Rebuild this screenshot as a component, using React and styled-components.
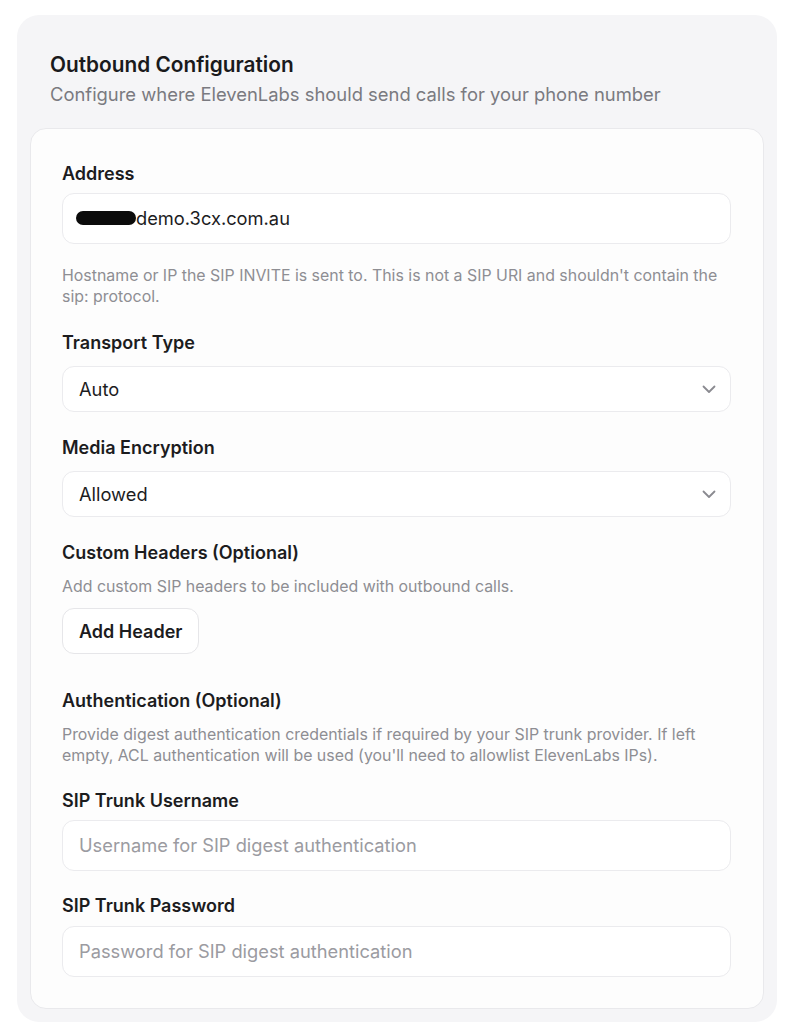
import React from 'react';
import styled, { createGlobalStyle } from 'styled-components';

const GlobalStyle = createGlobalStyle`
  body {
    margin: 0;
    background: #ffffff;
    font-family: Inter, "Noto Sans", sans-serif;
    color: #1c1c1e;
  }
`;

const Page = styled.div`
  padding: 15px 13px 2px 17px;
`;

const Panel = styled.section`
  background: #f5f5f7;
  border-radius: 22px;
  padding: 13px;
`;

const Header = styled.div`
  padding: 23px 20px 21px 20px;
`;

const Title = styled.h2`
  margin: 0;
  font-size: 20.8px;
  font-weight: 600;
  line-height: 28px;
  color: #1a1a1c;
`;

const Subtitle = styled.p`
  margin: 2px 0 0;
  font-size: 18.4px;
  line-height: 26px;
  color: #7a7a80;
`;

const Card = styled.div`
  background: #fdfdfd;
  border: 1px solid #e9e9ec;
  border-radius: 16px;
  padding: 32px 32px 31px 31px;
  display: flex;
  flex-direction: column;
  gap: 22.5px;
`;

const Field = styled.div`
  display: flex;
  flex-direction: column;
`;

const Label = styled.label`
  font-size: 18px;
  font-weight: 600;
  line-height: 25px;
  color: #1c1c1e;
  margin-bottom: ${p => (p.$gap === undefined ? 7 : p.$gap)}px;
`;

const Help = styled.p`
  margin: ${p => p.$top || 0}px 0 0;
  font-size: 15.9px;
  line-height: 21px;
  color: #8e8e93;
`;

const InputBox = styled.div`
  height: 51px;
  box-sizing: border-box;
  border: 1px solid #ebebee;
  border-radius: 12px;
  background: #ffffff;
  display: flex;
  align-items: center;
  padding: 0 16px;
  font-size: 18.3px;
  color: ${p => (p.$placeholder ? '#9b9ba1' : '#1c1c1e')};
`;

const SelectBox = styled(InputBox)`
  height: 46px;
  justify-content: space-between;
  padding-right: 9px;
  margin-top: 4.5px;
`;

const Redacted = styled.span`
  display: inline-block;
  width: 60px;
  height: 14px;
  background: #0b0b0b;
  border-radius: 7px;
  margin-left: -3px;
`;

const Button = styled.button`
  align-self: flex-start;
  height: 46px;
  padding: 0 16px;
  border: 1px solid #e6e6e9;
  border-radius: 12px;
  background: #ffffff;
  font-family: inherit;
  font-size: 18px;
  font-weight: 600;
  color: #1c1c1e;
  margin-top: 11.5px;
`;

const Chevron = () => (
  <svg width="24" height="24" viewBox="0 0 24 24" fill="none" stroke="#8a8a90" strokeWidth="1.8" strokeLinecap="round" strokeLinejoin="round">
    <path d="m6.5 9.5 5.5 5.5 5.5-5.5" />
  </svg>
);

const Select = ({ value }) => (
  <SelectBox>
    <span>{value}</span>
    <Chevron />
  </SelectBox>
);

export default function App() {
  return (
    <Page>
      <GlobalStyle />
      <Panel>
        <Header>
          <Title>Outbound Configuration</Title>
          <Subtitle>Configure where ElevenLabs should send calls for your phone number</Subtitle>
        </Header>
        <Card>
          <Field>
            <Label $gap={6.5}>Address</Label>
            <InputBox>
              <Redacted />
              demo.3cx.com.au
            </InputBox>
            <Help $top={21.5}>
              Hostname or IP the SIP INVITE is sent to. This is not a SIP URI and shouldn't contain the sip: protocol.
            </Help>
          </Field>
          <Field>
            <Label>Transport Type</Label>
            <Select value="Auto" />
          </Field>
          <Field>
            <Label>Media Encryption</Label>
            <Select value="Allowed" />
          </Field>
          <Field>
            <Label $gap={0}>Custom Headers (Optional)</Label>
            <Help $top={11}>Add custom SIP headers to be included with outbound calls.</Help>
            <Button>Add Header</Button>
          </Field>
          <Field style={{ marginTop: 11 }}>
            <Label $gap={0}>Authentication (Optional)</Label>
            <Help $top={11}>
              Provide digest authentication credentials if required by your SIP trunk provider. If left empty, ACL authentication will be used (you'll need to allowlist ElevenLabs IPs).
            </Help>
          </Field>
          <Field>
            <Label $gap={6.5}>SIP Trunk Username</Label>
            <InputBox $placeholder>Username for SIP digest authentication</InputBox>
          </Field>
          <Field>
            <Label $gap={7.5}>SIP Trunk Password</Label>
            <InputBox $placeholder>Password for SIP digest authentication</InputBox>
          </Field>
        </Card>
      </Panel>
    </Page>
  );
}
